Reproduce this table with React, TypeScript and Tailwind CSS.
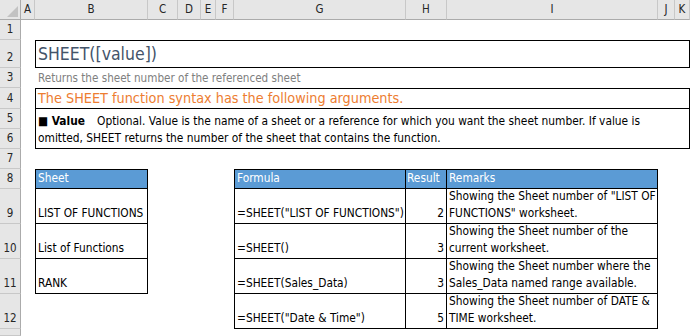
import React from 'react';

const cols = ['A', 'B', 'C', 'D', 'E', 'F', 'G', 'H', 'I', 'J', 'K'];
// row 13 is only partly in view, its number falls below the window
const rows = ['1', '2', '3', '4', '5', '6', '7', '8', '9', '10', '11', '12', ''];

const font = "font-['DejaVu_Sans_Condensed','Liberation_Sans',sans-serif]";

const sheets = ['LIST OF FUNCTIONS', 'List of Functions', 'RANK'];

const formulas = [
  { f: '=SHEET("LIST OF FUNCTIONS")', r: 2, l1: 'Showing the Sheet number of "LIST OF', l2: 'FUNCTIONS" worksheet.' },
  { f: '=SHEET()', r: 3, l1: 'Showing the Sheet number of the', l2: 'current worksheet.' },
  { f: '=SHEET(Sales_Data)', r: 3, l1: 'Showing the Sheet number where the', l2: 'Sales_Data named range available.' },
  { f: '=SHEET("Date & Time")', r: 5, l1: 'Showing the Sheet number of DATE &', l2: 'TIME worksheet.' },
];

const rowStart = ['row-start-10', 'row-start-11', 'row-start-12', 'row-start-13'];

const App: React.FC = () => {
  return (
    <div
      className={`w-[699px] h-[336px] overflow-hidden bg-white text-black ${font} grid grid-cols-[21px_14px_113px_30px_23px_15px_18px_172px_41px_211px_17px_15px_1fr] grid-rows-[20px_20px_28px_20px_21px_20px_20px_20px_20px_35px_35px_35px_35px_1fr]`}
    >
      {/* corner */}
      <div className="col-start-1 row-start-1 bg-[#e6e6e6] border-r border-b border-[#ababab] flex items-end justify-end pr-[2px] pb-[2px]">
        <svg width="11" height="11" viewBox="0 0 11 11">
          <polygon points="11,0 11,11 0,11" fill="#c2c2c2" />
        </svg>
      </div>

      {/* column headers */}
      {cols.map((c, i) => (
        <div
          key={c}
          style={{ gridColumnStart: i + 2 }}
          className="row-start-1 bg-[#e6e6e6] border-r border-r-[#c8c8c8] border-b border-b-[#ababab] flex items-center justify-center text-[11.5px] text-[#262626]"
        >
          {c}
        </div>
      ))}

      {/* row headers */}
      {rows.map((r, i) => (
        <div
          key={i}
          style={{ gridRowStart: i + 2 }}
          className="col-start-1 bg-[#e6e6e6] border-r border-r-[#ababab] border-b border-b-[#c8c8c8] flex items-end justify-center pb-[2px] text-[11.5px] text-[#262626] leading-[16px]"
        >
          {r}
        </div>
      ))}

      {/* row 2 title */}
      <div className="col-start-3 col-end-13 row-start-3 border border-black flex items-end px-[2px] pb-[1px] text-[17.5px] leading-[24px] text-[#44546a]">
        SHEET([value])
      </div>

      {/* row 3 */}
      <div className="col-start-3 col-end-13 row-start-4 flex items-end px-[3px] pb-[2px] text-[11.6px] leading-[16px] text-[#808080] whitespace-nowrap">
        Returns the sheet number of the referenced sheet
      </div>

      {/* row 4 */}
      <div className="col-start-3 col-end-13 row-start-5 border border-black flex items-end px-[2px] pb-[1px] text-[14.3px] leading-[18px] text-[#ed7d31] whitespace-nowrap">
        The SHEET function syntax has the following arguments.
      </div>

      {/* rows 5-6 */}
      <div className="col-start-3 col-end-13 row-start-6 row-span-2 border-x border-b border-black flex flex-col justify-end px-[2px] pb-[1px] text-[11.85px] leading-[17px] whitespace-nowrap">
        <div>
          <span className="font-bold">■ Value</span>
          <span className="inline-block w-[12px]" />
          Optional. Value is the name of a sheet or a reference for which you want the sheet number. If value is
        </div>
        <div>omitted, SHEET returns the number of the sheet that contains the function.</div>
      </div>

      {/* Sheet table */}
      <div className="col-start-3 row-start-9 bg-[#5b9bd5] text-white border border-black flex items-end px-[2px] pb-[1px] text-[11.8px] leading-[17px]">
        Sheet
      </div>
      {sheets.map((s, i) => (
        <div
          key={s}
          className={`col-start-3 ${rowStart[i]} border-x border-b border-black flex items-end px-[2px] pb-[1px] text-[11.8px] leading-[17px] whitespace-nowrap`}
        >
          {s}
        </div>
      ))}

      {/* Formula table header */}
      <div className="col-start-8 row-start-9 bg-[#5b9bd5] text-white border border-black flex items-end px-[2px] pb-[1px] text-[11.8px] leading-[17px]">
        Formula
      </div>
      <div className="col-start-9 row-start-9 bg-[#5b9bd5] text-white border-y border-r border-black flex items-end px-[1px] pb-[1px] text-[11.8px] leading-[17px]">
        Result
      </div>
      <div className="col-start-10 row-start-9 bg-[#5b9bd5] text-white border-y border-r border-black flex items-end px-[2px] pb-[1px] text-[11.8px] leading-[17px]">
        Remarks
      </div>

      {formulas.map((row, i) => (
        <React.Fragment key={row.f}>
          <div
            className={`col-start-8 ${rowStart[i]} border-x border-b border-black flex items-end px-[2px] pb-[1px] text-[11.8px] leading-[17px] whitespace-nowrap`}
          >
            {row.f}
          </div>
          <div
            className={`col-start-9 ${rowStart[i]} border-r border-b border-black flex items-end justify-end px-[2px] pb-[1px] text-[11.8px] leading-[17px]`}
          >
            {row.r}
          </div>
          <div
            className={`col-start-10 ${rowStart[i]} border-r border-b border-black flex flex-col justify-end px-[2px] pb-[1px] text-[11.8px] leading-[17px] whitespace-nowrap`}
          >
            <div>{row.l1}</div>
            <div>{row.l2}</div>
          </div>
        </React.Fragment>
      ))}
    </div>
  );
};

export default App;
